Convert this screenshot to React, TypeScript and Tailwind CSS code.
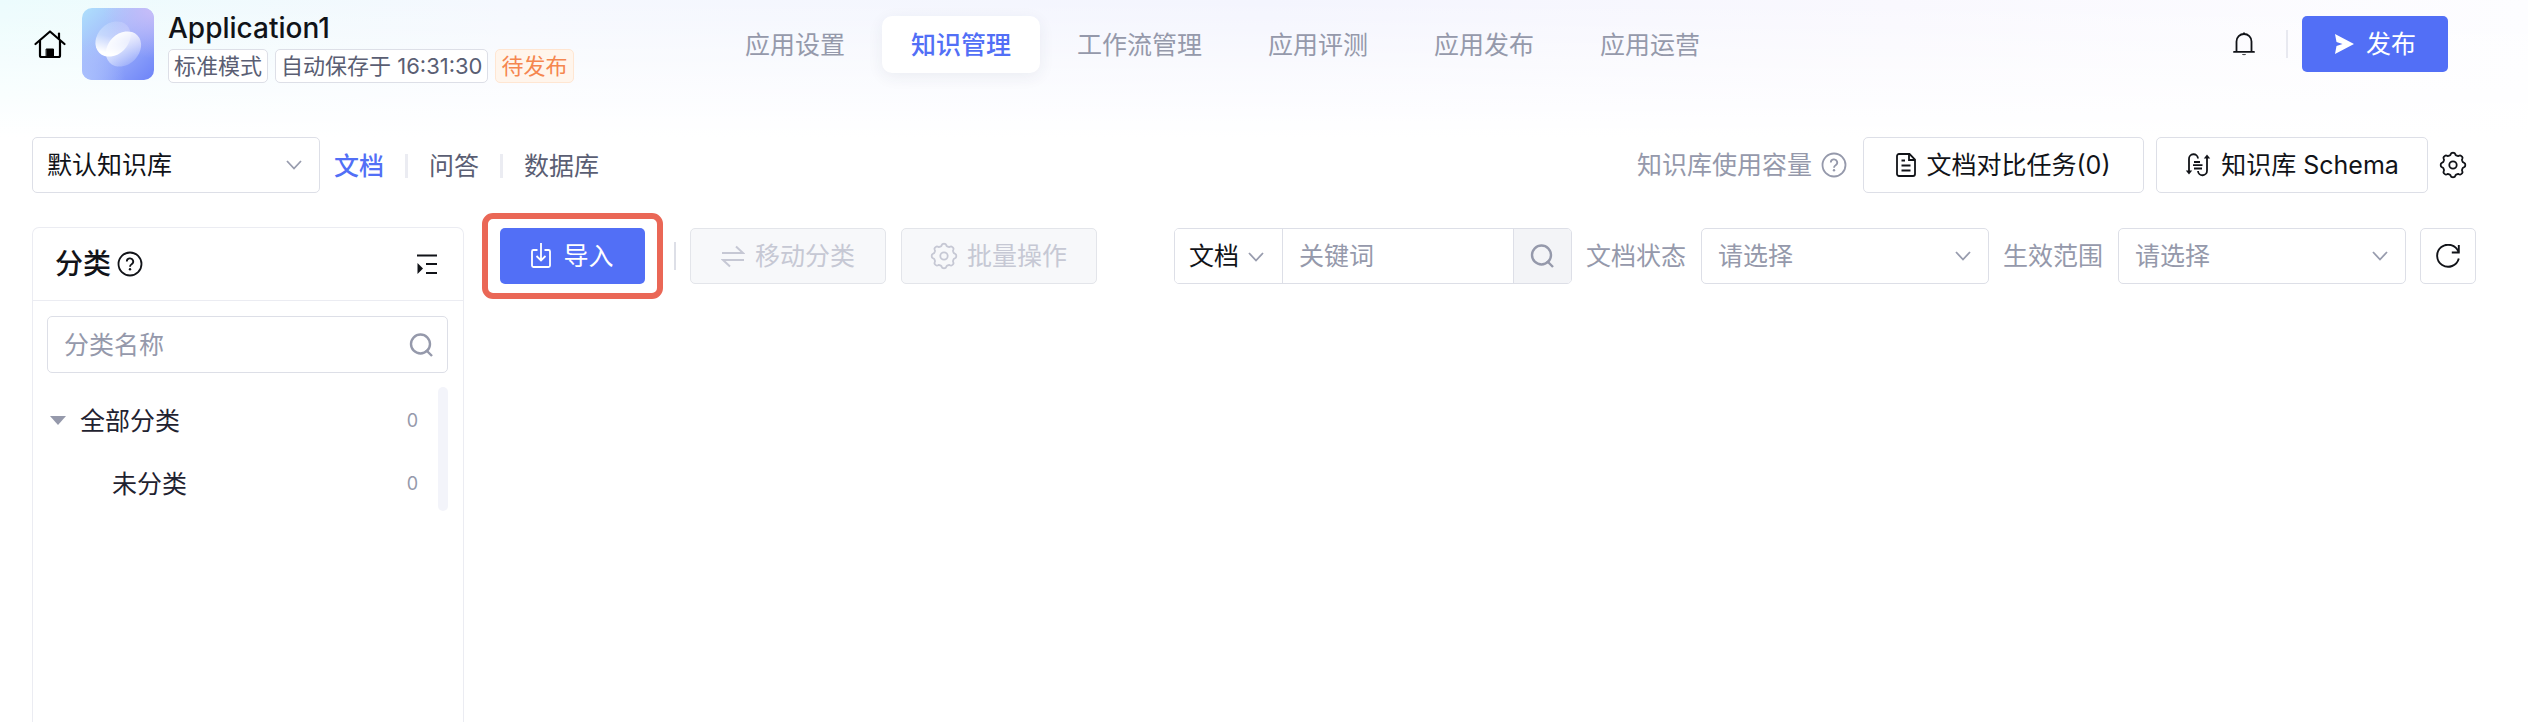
import React, { useState } from 'react';

const tabs = ['应用设置', '知识管理', '工作流管理', '应用评测', '应用发布', '应用运营'];
const views = ['文档', '问答', '数据库'];

const categories = [
  { name: '全部分类', count: 0, root: true },
  { name: '未分类', count: 0, root: false },
];

const HomeIcon = () => (
  <svg className="size-8" viewBox="0 0 32 32" fill="none" stroke="#000" strokeWidth="2.2" strokeLinecap="round" strokeLinejoin="round">
    <path d="M1.5 16 16 3.500 30.500 16" />
    <path d="M6 13v14.500a1.500 1.500 0 0 0 1.500 1.500h17a1.500 1.500 0 0 0 1.500-1.500V13" />
    <path d="M25 5.500v5.500" />
    <path d="M12.500 21h7v8h-7z" fill="#000" strokeWidth="1" />
  </svg>
);

const AppLogo = () => (
  <svg className="size-[72px] shrink-0" viewBox="0 0 72 72">
    <defs>
      <linearGradient id="base" x1="0" y1="0" x2="1" y2="1">
        <stop offset="0" stopColor="#aee0fc" />
        <stop offset="0.45" stopColor="#a3b7fb" />
        <stop offset="1" stopColor="#6d83f8" />
      </linearGradient>
      <radialGradient id="corner" cx="1" cy="0" r="0.7">
        <stop offset="0" stopColor="#c9bdf8" />
        <stop offset="1" stopColor="#c9bdf8" stopOpacity="0" />
      </radialGradient>
      <radialGradient id="foot" cx="0" cy="1" r="0.6">
        <stop offset="0" stopColor="#a9bffd" />
        <stop offset="1" stopColor="#a9bffd" stopOpacity="0" />
      </radialGradient>
      <linearGradient id="petalA" x1="0.9" y1="0.2" x2="0.1" y2="0.6">
        <stop offset="0" stopColor="#fff" stopOpacity="0.15" />
        <stop offset="0.5" stopColor="#fff" stopOpacity="0.35" />
        <stop offset="1" stopColor="#fff" />
      </linearGradient>
      <linearGradient id="petalB" x1="0.8" y1="0" x2="0.4" y2="1">
        <stop offset="0" stopColor="#fff" />
        <stop offset="1" stopColor="#fff" stopOpacity="0.2" />
      </linearGradient>
    </defs>
    <rect width="72" height="72" rx="10" fill="url(#base)" />
    <rect width="72" height="72" rx="10" fill="url(#corner)" />
    <rect width="72" height="72" rx="10" fill="url(#foot)" />
    <ellipse cx="31" cy="31" rx="19.500" ry="15.500" transform="rotate(-45 31 31)" fill="url(#petalA)" />
    <ellipse cx="41.500" cy="41" rx="19.500" ry="15.500" transform="rotate(-45 41.500 41)" fill="url(#petalB)" />
  </svg>
);

const BellIcon = () => (
  <svg className="h-7 w-6" viewBox="0 0 24 28" fill="none" stroke="#111318" strokeWidth="1.8">
    <path d="M4.500 21.500V11.500a7.500 7.500 0 0 1 15 0v10" />
    <path d="M2 21.900h20" strokeLinecap="round" />
    <path d="M12 4V2.500" />
    <path d="M10 24.300h4c-.4 1.200-3.600 1.200-4 0z" fill="#111318" stroke="none" />
  </svg>
);

const SendIcon = () => (
  <svg className="size-5" viewBox="0 0 20 20" fill="#fff">
    <path d="M1 0 20 10 1 20l1.500-8 6-2-6-2z" />
  </svg>
);

const ChevronIcon = ({ className = '' }: { className?: string }) => (
  <svg className={`h-3 w-4 shrink-0 pointer-events-none ${className}`} viewBox="0 0 16 12" fill="none" stroke="#989cae" strokeWidth="1.8">
    <path d="m1 2 7 7.500L15 2" />
  </svg>
);

const HelpIcon = ({ color }: { color: string }) => (
  <svg className="size-[26px] shrink-0" viewBox="0 0 26 26" fill="none" stroke={color} strokeWidth="1.8">
    <circle cx="13" cy="13" r="11.500" />
    <path d="M9.800 10.600a3.200 3.200 0 1 1 4.800 2.700c-1 .6-1.600 1.200-1.600 2.400" />
    <circle cx="13" cy="18.200" r="1.200" fill={color} stroke="none" />
  </svg>
);

const DocIcon = () => (
  <svg className="h-6 w-5" viewBox="0 0 20 24" fill="none" stroke="#111318" strokeWidth="1.800">
    <path d="M3 1h10.500L19 6.500v14.500a2 2 0 0 1-2 2H3a2 2 0 0 1-2-2V3a2 2 0 0 1 2-2z" />
    <path d="M13 1v6h6M5.500 7.500h3.500M5.500 12.500h9M5.500 17.500h9" />
  </svg>
);

const SchemaIcon = () => (
  <svg className="size-[26px]" viewBox="0 0 26 26" fill="none" stroke="#111318" strokeWidth="1.8">
    <path d="M4 20V7a4.500 4.500 0 0 1 9-.500" />
    <path d="M.8 18.500h6.400L4 22.500z" fill="#111318" stroke="none" />
    <path d="M22 6v12.500a4.500 4.500 0 0 1-9 .5" />
    <path d="M18.800 6.500h6.400L22 2.500z" fill="#111318" stroke="none" />
    <path d="M9 10h6M8 13.200h9.500M9 16.500h8" />
  </svg>
);

// eight soft teeth, first one pointing up
const gearPath =
  Array.from({ length: 96 }, (_, i) => {
    const angle = (i / 96) * Math.PI * 2;
    const radius = 11.2 + 1.1 * Math.tanh(2 * Math.cos(angle * 8));
    const x = 13 + radius * Math.sin(angle);
    const y = 13 - radius * Math.cos(angle);
    return `${i === 0 ? 'M' : 'L'}${x.toFixed(2)} ${y.toFixed(2)}`;
  }).join(' ') + 'Z';

const GearIcon = ({ color }: { color: string }) => (
  <svg className="size-[26px] shrink-0 overflow-visible" viewBox="0 0 26 26" fill="none" stroke={color} strokeWidth="1.800" strokeLinejoin="round">
    <path d={gearPath} />
    <circle cx="13" cy="13" r="3.700" />
  </svg>
);

const CollapseIcon = () => (
  <svg className="size-5" viewBox="0 0 20 20" fill="none" stroke="#111318" strokeWidth="1.800">
    <path d="M0 1.500h20M9 10h11M9 19h11" />
    <path d="M.5 9v11l5.500-5.500z" fill="#111318" stroke="none" />
  </svg>
);

const SearchIcon = () => (
  <svg className="size-6" viewBox="0 0 24 24" fill="none" stroke="#9599ab" strokeWidth="2.400">
    <circle cx="11.500" cy="11" r="9.500" />
    <path d="m17 17 6 6" />
  </svg>
);

const ImportIcon = () => (
  <svg className="h-[26px] w-5" viewBox="0 0 20 26" fill="none" stroke="#fff" strokeWidth="1.800">
    <path d="M6.500 7H2.500A1.500 1.500 0 0 0 1 8.500v14A1.500 1.500 0 0 0 2.500 24h15a1.500 1.500 0 0 0 1.500-1.500v-14A1.500 1.500 0 0 0 17.500 7h-4" />
    <path d="M10 0v17.500M5.500 13l4.500 4.500 4.500-4.500" />
  </svg>
);

const SwapIcon = () => (
  <svg className="h-6 w-6" viewBox="0 0 24 24" fill="none" stroke="#c6c8d4" strokeWidth="2">
    <path d="M1 9h21l-7-6.500M23 16H2l7 6.500" />
  </svg>
);

const RefreshIcon = () => (
  <svg className="size-6" viewBox="0 0 24 24" fill="none" stroke="#111318" strokeWidth="1.900">
    <path d="M22.800 14.500A11 11 0 1 1 22.500 8" />
    <path d="M22.800 1v7.500h-7" />
  </svg>
);

const FilterSelect = ({ id, label }: { id: string; label: string }) => (
  <div className="flex items-center gap-[15px]">
    <label htmlFor={id} className="whitespace-nowrap text-[#9599ab]">{label}</label>
    <div className="relative w-[288px]">
      <select id={id} className="h-14 w-full appearance-none rounded-[5px] border border-[#dddfe7] bg-white px-4 text-[#9599ab]">
        <option>请选择</option>
      </select>
      <ChevronIcon className="absolute top-[22px] right-[18px]" />
    </div>
  </div>
);

const App = () => {
  const [activeTab, setActiveTab] = useState('知识管理');
  const [view, setView] = useState('文档');

  return (
    <div className="flex min-h-screen flex-col bg-white font-[Inter,'Noto_Sans_CJK_SC',sans-serif] text-[25px] leading-9 text-[#111318]">
      <div className="bg-[linear-gradient(to_bottom,transparent,#fff),linear-gradient(to_right,#ecfcfd,#f5f8fe_20%,#f4f5fe_50%,#f9f8fe_75%,#fdfdff)]">
        <header className="flex h-[104px] items-start pl-[34px] pr-20">
          <div className="flex w-[682px] shrink-0 pt-2">
            <a href="#" aria-label="首页" className="mt-5 mr-4">
              <HomeIcon />
            </a>
            <AppLogo />
            <div className="ml-[14px]">
              <h1 className="text-[28px] font-medium leading-[41px]">Application1</h1>
              <div className="flex gap-[7px] text-[22px] leading-8 text-[#5a5e73]">
                <span className="rounded-[5px] border border-[#dddfe7] bg-white px-[5px]">标准模式</span>
                <span className="rounded-[5px] border border-[#dddfe7] bg-white px-[5px]">自动保存于 16:31:30</span>
                <span className="rounded-[5px] border border-[#ffe6d2] bg-[#fff5ec] px-[5px] text-[#f5864f]">待发布</span>
              </div>
            </div>
          </div>

          <nav className="flex gap-2 pt-4">
            {tabs.map((tab) => (
              <button
                key={tab}
                onClick={() => setActiveTab(tab)}
                className={`h-[57px] rounded-[10px] px-[29px] whitespace-nowrap ${
                  tab === activeTab
                    ? 'bg-white font-medium text-[#526ff6] shadow-[0_4px_16px_rgba(40,50,90,0.07)]'
                    : 'text-[#9599ab]'
                }`}
              >
                {tab}
              </button>
            ))}
          </nav>

          <div className="ml-auto flex items-center pt-4">
            <button aria-label="通知">
              <BellIcon />
            </button>
            <span className="mr-[14px] ml-[30px] h-7 w-[2px] bg-[#e8e9f0]" />
            <button className="flex h-14 w-[146px] items-center justify-center gap-3 rounded-[5px] bg-[#526ff6] text-white">
              <SendIcon />
              发布
            </button>
          </div>
        </header>

        <div className="h-[33px]" />
      </div>

      <div className="flex items-center pl-8 pr-[62px]">
        <div className="relative w-[288px]">
          <select aria-label="知识库" className="h-14 w-full appearance-none rounded-[5px] border border-[#dddfe7] bg-white px-[14px]">
            <option>默认知识库</option>
          </select>
          <ChevronIcon className="absolute top-[22px] right-[18px]" />
        </div>
        <div className="ml-[14px] flex items-center pt-[2px]">
          {views.map((name, index) => (
            <React.Fragment key={name}>
              {index > 0 && <span className="mx-[21px] h-6 w-[3px] bg-[#ebecf2]" />}
              <button
                onClick={() => setView(name)}
                className={name === view ? 'font-medium text-[#526ff6]' : 'text-[#5a5e73]'}
              >
                {name}
              </button>
            </React.Fragment>
          ))}
        </div>

        <div className="ml-auto flex items-center">
          <span className="mr-[9px] text-[#9599ab]">知识库使用容量</span>
          <HelpIcon color="#9599ab" />
          <button className="mr-3 ml-4 flex h-14 w-[281px] items-center justify-center gap-[10px] rounded-[5px] border border-[#dddfe7] bg-white">
            <DocIcon />
            文档对比任务(0)
          </button>
          <button className="mr-3 flex h-14 w-[272px] items-center justify-center gap-[10px] rounded-[5px] border border-[#dddfe7] bg-white">
            <SchemaIcon />
            知识库 Schema
          </button>
          <button aria-label="设置">
            <GearIcon color="#111318" />
          </button>
        </div>
      </div>

      <div className="mt-[34px] flex flex-1 pl-8 pr-[52px]">
        <aside className="w-[432px] shrink-0 rounded-t-[7px] border border-b-0 border-[#ebecf2]">
          <div className="flex h-[73px] items-center border-b border-[#ebecf2] pr-[26px] pl-[22px]">
            <h2 className="mr-[6px] text-[28px] font-medium">分类</h2>
            <HelpIcon color="#111318" />
            <button aria-label="收起" className="ml-auto">
              <CollapseIcon />
            </button>
          </div>
          <div className="pt-[15px] pr-[15px] pl-[14px]">
            <div className="flex h-[57px] items-center rounded-[5px] border border-[#dddfe7] pr-[14px] pl-4">
              <input
                aria-label="分类名称"
                placeholder="分类名称"
                className="min-w-0 flex-1 bg-transparent outline-none placeholder:text-[#9599ab]"
              />
              <SearchIcon />
            </div>
            <div className="mt-[14px] flex items-start">
              <ul className="flex-1 pt-[2px] text-[#1f2230]">
                {categories.map((item) => (
                  <li key={item.name} className="flex h-[63px] items-center pr-5 pl-[3px]">
                    {item.root ? (
                      <svg className="mr-[14px] h-[9px] w-4" viewBox="0 0 16 9" fill="#9599ab">
                        <path d="M0 0h16L8 9z" />
                      </svg>
                    ) : (
                      <span className="w-[62px]" />
                    )}
                    {item.name}
                    <span className="ml-auto text-[18px] text-[#9599ab]">{item.count}</span>
                  </li>
                ))}
              </ul>
              <div className="h-[124px] w-[10px] rounded-full bg-[#f3f4fa]" />
            </div>
          </div>
        </aside>

        <main className="mt-px flex h-14 flex-1 items-center">
          <div className="-my-[15px] ml-[18px] rounded-[11px] border-[6px] border-[#ea6756] px-3 py-[9px]">
            <button className="flex h-14 w-[145px] items-center justify-center gap-3 rounded-[5px] bg-[#526ff6] text-white">
              <ImportIcon />
              导入
            </button>
          </div>
          <span className="mr-[14px] ml-[11px] h-7 w-[2px] bg-[#dddfe7]" />
          <button disabled className="flex h-14 w-[196px] items-center justify-center gap-[10px] rounded-[5px] border border-[#e3e5ea] bg-[#f7f8fa] text-[#c6c8d4]">
            <SwapIcon />
            移动分类
          </button>
          <button disabled className="ml-[15px] flex h-14 w-[196px] items-center justify-center gap-[10px] rounded-[5px] border border-[#e3e5ea] bg-[#f7f8fa] text-[#c6c8d4]">
            <GearIcon color="#c6c8d4" />
            批量操作
          </button>

          <div className="ml-auto flex items-center gap-[14px]">
            <div className="flex h-14 w-[398px] overflow-hidden rounded-[5px] border border-[#dddfe7]">
              <div className="relative w-[108px] shrink-0 border-r border-[#dddfe7]">
                <select aria-label="搜索类型" className="h-full w-full appearance-none bg-white pl-[14px]">
                  <option>文档</option>
                </select>
                <ChevronIcon className="absolute top-[22px] right-[18px]" />
              </div>
              <input
                aria-label="关键词"
                placeholder="关键词"
                className="min-w-0 flex-1 px-4 outline-none placeholder:text-[#9599ab]"
              />
              <button aria-label="搜索" className="flex w-[58px] items-center justify-center border-l border-[#dddfe7] bg-[#f3f4f7]">
                <SearchIcon />
              </button>
            </div>
            <FilterSelect id="status" label="文档状态" />
            <FilterSelect id="scope" label="生效范围" />
            <button aria-label="刷新" className="flex size-14 items-center justify-center rounded-[5px] border border-[#dddfe7] bg-white">
              <RefreshIcon />
            </button>
          </div>
        </main>
      </div>
    </div>
  );
};

export default App;
